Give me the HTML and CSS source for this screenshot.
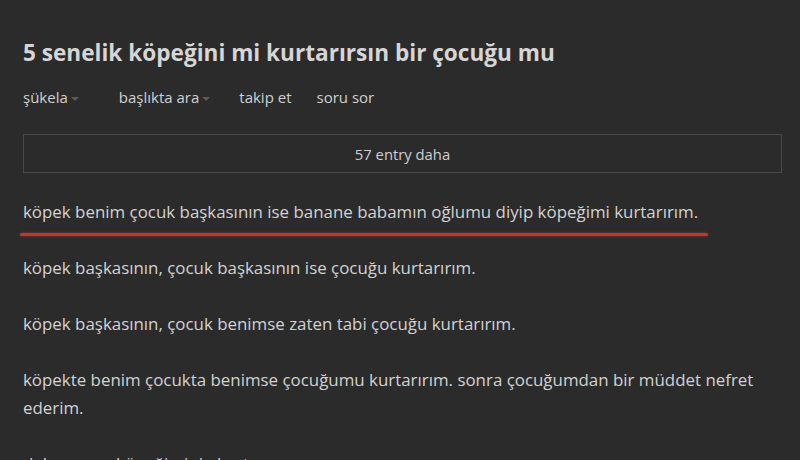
FILE: index.html
```html
<!DOCTYPE html>
<html lang="tr">
<head>
<meta charset="utf-8">
<link rel="stylesheet" href="styles.css">
</head>
<body>
<main class="page">
  <h1 class="title">5 senelik köpeğini mi kurtarırsın bir çocuğu mu</h1>
  <nav class="nav">
    <span class="nav-item sort">şükela<span class="caret"></span></span>
    <span class="nav-item search">başlıkta ara<span class="caret"></span></span>
    <span class="nav-item follow">takip et</span>
    <span class="nav-item">soru sor</span>
  </nav>
  <div class="more">57 entry daha</div>
  <ul class="entries">
    <li class="entry marked">köpek benim çocuk başkasının ise banane babamın oğlumu diyip köpeğimi kurtarırım.</li>
    <li class="entry">köpek başkasının, çocuk başkasının ise çocuğu kurtarırım.</li>
    <li class="entry">köpek başkasının, çocuk benimse zaten tabi çocuğu kurtarırım.</li>
    <li class="entry">köpekte benim çocukta benimse çocuğumu kurtarırım. sonra çocuğumdan bir müddet nefret ederim.</li>
    <li class="entry">daha sonra köpeğimi de kurtarırım.</li>
  </ul>
</main>
</body>
</html>
```

FILE: styles.css
```css
html, body {
  margin: 0;
  padding: 0;
  background: #2b2b2b;
  height: 460px;
  overflow: hidden;
}
.page {
  padding: 38px 18px 0 23px;
  font-family: "Open Sans", "Noto Sans", sans-serif;
  color: #d2d2d2;
}
.title {
  margin: 0;
  font-size: 22.6px;
  font-weight: 700;
  line-height: 30px;
  color: #d6d6d6;
  letter-spacing: 0;
}
.nav {
  display: flex;
  margin-top: 19px;
  font-size: 15px;
  line-height: 20px;
  color: #d0d0d0;
}
.nav-item { margin-right: 26px; }
.nav-item.sort { margin-right: 40px; }
.nav-item.search { margin-right: 29px; }
.nav-item.follow { margin-right: 25px; }
.caret {
  display: inline-block;
  width: 0; height: 0;
  border-left: 4px solid transparent;
  border-right: 4px solid transparent;
  border-top: 4px solid #5a5a5a;
  margin-left: 3px;
  vertical-align: middle;
}
.more {
  margin-top: 27px;
  height: 37px;
  border: 1px solid #4a4a4a;
  display: flex;
  align-items: center;
  justify-content: center;
  font-size: 14.8px;
  color: #cfcfcf;
}
.entries {
  list-style: none;
  margin: 25px 0 0;
  padding: 0;
}
.entry {
  font-size: 16.9px;
  line-height: 28px;
  margin-bottom: 28px;
  max-width: 740px;
}
.entry.marked {
  position: relative;
}
.entry.marked::after {
  content: "";
  position: absolute;
  left: -3px;
  width: 688px;
  bottom: -10px;
  height: 3px;
  background: #c0392f;
  box-shadow: 0 0 3px rgba(200, 60, 50, 0.6);
  border-radius: 2px;
}
```
